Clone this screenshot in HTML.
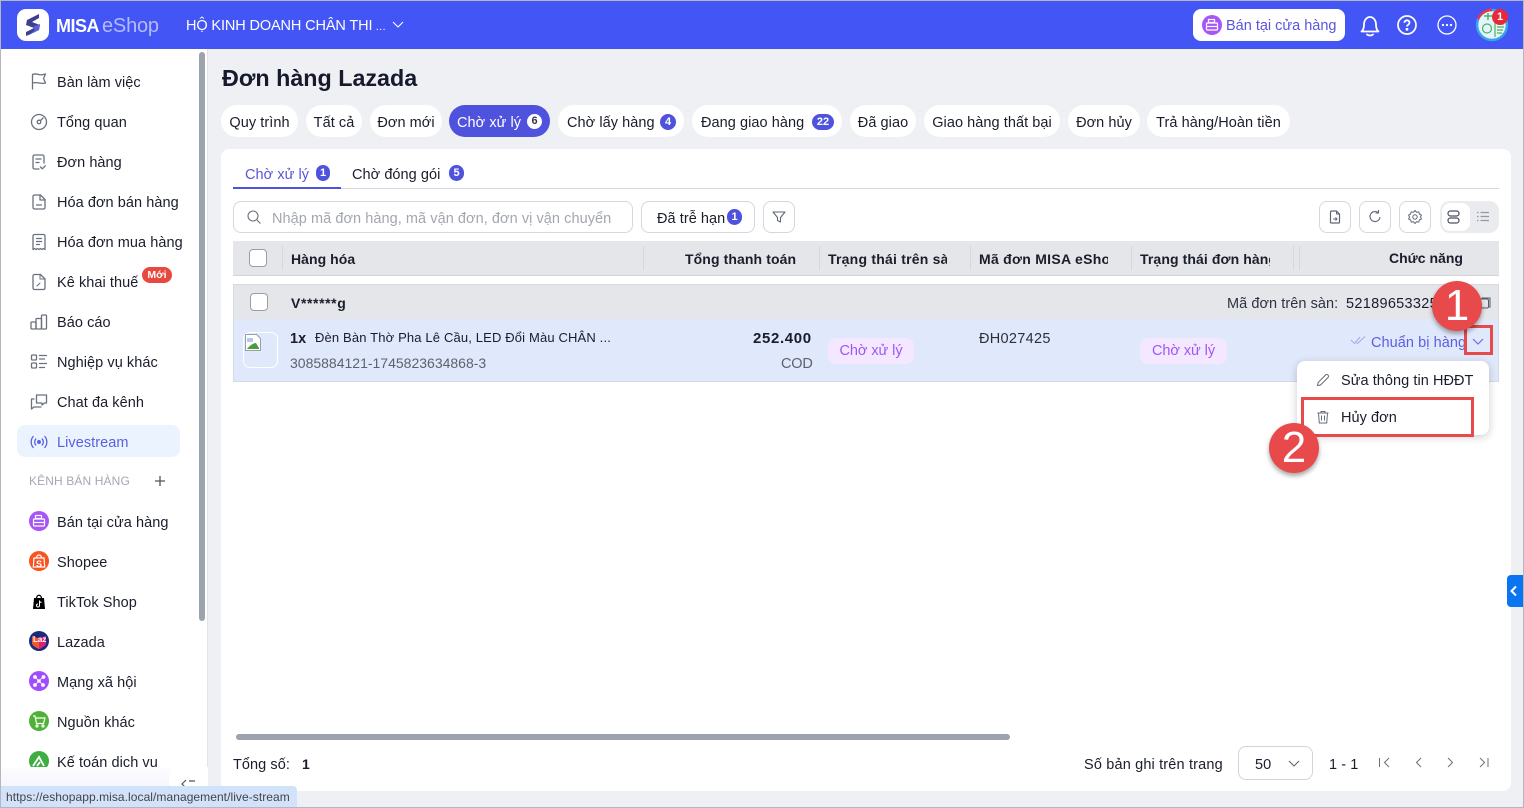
<!DOCTYPE html>
<html lang="vi"><head><meta charset="utf-8"><title>Đơn hàng Lazada</title>
<style>
*{box-sizing:border-box}
html,body{margin:0;padding:0;width:1524px;height:808px;overflow:hidden;background:#eef0f4;font-family:"Liberation Sans",sans-serif;color:#1a1d2b}
.a{position:absolute}
.t{position:absolute;white-space:nowrap;font-size:14.5px;line-height:20px;letter-spacing:.06px;margin-top:1px}
.n{margin-top:0}
.b{font-weight:700}
.pill{position:absolute;top:105px;height:32px;border-radius:16px;background:#fff;font-size:14.5px;line-height:37px;text-align:center;white-space:nowrap;letter-spacing:.06px}
.bd{display:inline-block;min-width:16px;height:16px;border-radius:8px;background:#4f52dc;color:#fff;font-size:11px;font-weight:700;line-height:16px;text-align:center;letter-spacing:0;padding:0 3px}
.ic{position:absolute;width:20px;height:20px;fill:none;stroke:#6a707c;stroke-width:1.3;stroke-linecap:round;stroke-linejoin:round}
.c{position:absolute;width:20px;height:20px;border-radius:50%}
.tb{position:absolute;top:201px;width:32px;height:32px;border:1px solid #d5d7de;border-radius:8px;background:#fff}
.sep{position:absolute;top:246px;width:1px;height:24px;background:#d6d8de}
.cb{position:absolute;width:18px;height:18px;border:1px solid #9a9ea8;border-radius:4px;background:#fff}
.num{position:absolute;width:50px;height:50px;border-radius:50%;background:#e8494a;color:#fff;font-size:44px;line-height:50px;text-align:center;box-shadow:0 3px 5px rgba(0,0,0,.35)}
.tag{position:absolute;top:338px;height:26px;border-radius:8px;background:#f3e8ff;color:#a155f7;font-size:14.5px;line-height:26px;text-align:center;letter-spacing:-.05px}
</style></head><body>

<!-- top bar -->
<div class="a" style="left:0;top:0;width:1524px;height:49px;background:#4355f5;border-top:1px solid #b5b7c0"></div>
<div class="a" style="left:17px;top:9px;width:32px;height:32px;border-radius:9px;background:#fff"></div>
<svg class="a" style="left:23px;top:13px" width="20" height="24" viewBox="0 0 20 24"><path d="M16 1 4 7 3 12l8 3-8 4v4l13-6 1-5-8-3 7-4z" fill="#3d3f8f"/><path d="M9 14l8-3-1 6-12 6 8-6z" fill="#5b5fd6"/></svg>
<div class="t b" style="left:56px;top:13px;font-size:18px;line-height:24px;color:#fff;letter-spacing:-.5px">MISA</div>
<div class="t" style="left:102px;top:13px;font-size:20px;line-height:24px;color:#b4bcfa;letter-spacing:-.2px">eShop</div>
<div class="t" style="left:186px;top:15px;font-size:14.5px;color:#fff;letter-spacing:-.12px">HỘ KINH DOANH CHÂN THI<span style="font-size:11px;letter-spacing:.3px"> ...</span></div>
<svg class="a" style="left:391px;top:19px" width="14" height="12" fill="none" stroke="#fff" stroke-width="1.100"><path d="M2 3l5 5 5-5"/></svg>

<div class="a" style="left:1193px;top:9px;width:152px;height:32px;border-radius:8px;background:#fff"></div>
<div class="c" style="left:1202px;top:15px;background:#a855f7"></div>
<svg class="a" style="left:1202px;top:15px" width="20" height="20" fill="none" stroke="#fff" stroke-width="1.200"><rect x="6.500" y="4.500" width="6" height="3"/><rect x="4.500" y="8" width="11" height="7" rx="1"/><path d="M4.500 11.500h11"/></svg>
<div class="t" style="left:1226px;top:15px;color:#5a55dc;letter-spacing:0">Bán tại cửa hàng</div>
<svg class="a" style="left:1359px;top:13px" width="22" height="24" fill="none" stroke="#fff" stroke-width="1.800" stroke-linecap="round" stroke-linejoin="round"><path d="M2.500 18.500c2-1.600 2.500-3.500 2.500-7 0-4 2.500-7.500 6-7.500s6 3.500 6 7.500c0 3.500.5 5.400 2.500 7z"/><path d="M8 21.500c1.800 1.300 4.200 1.300 6 0"/></svg>
<svg class="a" style="left:1396px;top:14px" width="22" height="22" fill="none" stroke="#fff" stroke-width="1.700"><circle cx="11" cy="11" r="9"/><path d="M8.500 8.800c0-3.300 5-3.300 5 0 0 2-2.500 2-2.500 3.700" stroke-width="1.800"/><circle cx="11" cy="15.300" r=".6" fill="#fff"/></svg>
<svg class="a" style="left:1436px;top:14px" width="22" height="22" fill="none" stroke="#fff" stroke-width="1.300"><circle cx="11" cy="11" r="9"/><circle cx="7" cy="11" r=".5" fill="#fff"/><circle cx="11" cy="11" r=".5" fill="#fff"/><circle cx="15" cy="11" r=".5" fill="#fff"/></svg>
<svg class="a" style="left:1475px;top:8px" width="34" height="34"><circle cx="17" cy="17" r="15" fill="#e3f4ff" stroke="#38a3e8" stroke-width="2.500"/><path d="M3 11A15 15 0 0 1 17 2" fill="none" stroke="#ef3340" stroke-width="2.500"/><circle cx="12" cy="20.500" r="4.500" fill="none" stroke="#4cb552" stroke-width="1.200"/><path d="M20 7v22" stroke="#4cb552" stroke-width="1.200"/><path d="M22 16h7M22 19h7M22 22h6M22 25h5" stroke="#4cb552" stroke-width="1.300"/><path d="M9 8h8M13 5v7" stroke="#4cb552" stroke-width="1.500"/></svg>
<div class="a b" style="left:1492px;top:9px;width:16px;height:16px;border-radius:50%;background:#e8293a;color:#fff;font-size:11px;line-height:16px;text-align:center">1</div>

<!-- sidebar -->
<div class="a" style="left:0;top:49px;width:208px;height:759px;background:#fff;border-right:1px solid #e2e4ea"></div>
<div class="a" style="left:199px;top:52px;width:6px;height:569px;border-radius:3px;background:#9ca3af"></div>
<div class="a" style="left:17px;top:425px;width:163px;height:32px;border-radius:8px;background:#ebf3ff"></div>

<svg class="ic" style="left:29px;top:71px" viewBox="0 0 20 20"><path d="M3.500 18V3.500c4-1.800 6 .8 9.500 .3l3.500-.8-2 4.500 2 4.500c-4.500 1.500-8-1.500-13 0"/></svg>
<svg class="ic" style="left:29px;top:112px" viewBox="0 0 20 20"><circle cx="10" cy="10" r="7.500"/><circle cx="10" cy="10" r="1.800"/><path d="M11.300 8.700 14 6"/></svg>
<svg class="ic" style="left:29px;top:152px" viewBox="0 0 20 20"><path d="M10 17H5.500A1.500 1.500 0 0 1 4 15.500V4.500A1.500 1.500 0 0 1 5.500 3h8A1.500 1.500 0 0 1 15 4.500V11"/><path d="M7 7h5M7 10.500h3M11.500 15l1.800 1.800 3-3"/></svg>
<svg class="ic" style="left:29px;top:192px" viewBox="0 0 20 20"><path d="M5.500 3h6L16 7.500v8A1.500 1.500 0 0 1 14.500 17h-9A1.500 1.500 0 0 1 4 15.500v-11A1.500 1.500 0 0 1 5.500 3z"/><path d="M11 3v5h5M7.500 13h5"/></svg>
<svg class="ic" style="left:29px;top:232px" viewBox="0 0 20 20"><path d="M4 17.500V4A1.500 1.500 0 0 1 5.500 2.500h9A1.500 1.500 0 0 1 16 4v13.500l-1.500-1-1.500 1-1.500-1-1.500 1-1.500-1-1.500 1-1.500-1z"/><path d="M7.500 6.500h5M7.500 9.500h5M7.500 12.500h3"/></svg>
<svg class="ic" style="left:29px;top:272px" viewBox="0 0 20 20"><path d="M5.500 2.500h6L16 7v9A1.500 1.500 0 0 1 14.500 17.500h-9A1.500 1.500 0 0 1 4 16V4A1.500 1.500 0 0 1 5.500 2.500z"/><path d="M11 2.500V7h5M8 14l3-3" stroke-width="1"/></svg>
<svg class="ic" style="left:29px;top:312px" viewBox="0 0 20 20"><rect x="2" y="10" width="5" height="7" rx="1"/><rect x="7" y="6.500" width="5.500" height="10.500" rx="1"/><rect x="12.500" y="3" width="5" height="14" rx="1"/></svg>
<svg class="ic" style="left:29px;top:352px" viewBox="0 0 20 20"><rect x="2.500" y="3" width="5" height="5" rx="1"/><rect x="2.500" y="11" width="5" height="5" rx="1"/><path d="M10.500 3.500h7M10.500 7h5M10.500 11.500h7M10.500 15.500h5"/></svg>
<svg class="ic" style="left:29px;top:392px" viewBox="0 0 20 20"><path d="M7.500 3h10v8h-2l-2.500 2v-2H7.500z"/><path d="M5 7H2.500v10l2.500-2h7"/></svg>
<svg class="ic" style="left:29px;top:432px;stroke:#5a5fe0" viewBox="0 0 20 20"><circle cx="10" cy="10" r="1.300" fill="#5a5fe0"/><path d="M6.800 13c-1.500-1.600-1.500-4.400 0-6M13.200 7c1.500 1.600 1.500 4.400 0 6M4.200 15.500c-2.700-3-2.700-8 0-11M15.800 4.500c2.700 3 2.700 8 0 11"/></svg>

<div class="t" style="left:57px;top:72px">Bàn làm việc</div>
<div class="t" style="left:57px;top:112px">Tổng quan</div>
<div class="t" style="left:57px;top:152px">Đơn hàng</div>
<div class="t" style="left:57px;top:192px">Hóa đơn bán hàng</div>
<div class="t" style="left:57px;top:232px">Hóa đơn mua hàng</div>
<div class="t" style="left:57px;top:272px">Kê khai thuế</div>
<div class="a b" style="left:142px;top:267px;width:30px;height:16px;border-radius:8px;background:#e8493f;color:#fff;font-size:10.500px;line-height:16px;text-align:center">Mới</div>
<div class="t" style="left:57px;top:312px">Báo cáo</div>
<div class="t" style="left:57px;top:352px">Nghiệp vụ khác</div>
<div class="t" style="left:57px;top:392px">Chat đa kênh</div>
<div class="t" style="left:57px;top:432px;color:#5a5fe0">Livestream</div>
<div class="t" style="left:29px;top:470px;font-size:12px;letter-spacing:.12px;color:#a5a8b2">KÊNH BÁN HÀNG</div>
<svg class="a" style="left:153px;top:474px" width="14" height="14" stroke="#555" stroke-width="1.300"><path d="M7 2v10M2 7h10"/></svg>

<div class="c" style="left:29px;top:511px;background:#a855f7"></div>
<svg class="a" style="left:29px;top:511px" width="20" height="20" fill="none" stroke="#fff" stroke-width="1.200"><rect x="6.500" y="4.500" width="6" height="3"/><rect x="4.500" y="8" width="11" height="7" rx="1"/><path d="M4.500 11.500h11"/></svg>
<div class="t" style="left:57px;top:512px">Bán tại cửa hàng</div>
<div class="c" style="left:29px;top:551px;background:#f9531f"></div>
<svg class="a" style="left:29px;top:551px" width="20" height="20" fill="none" stroke="#fff" stroke-width="1.200"><path d="M5 7h10l.7 9H4.300zM7.500 7c0-4 5-4 5 0"/></svg>
<div class="a b" style="left:36px;top:558px;font-size:9px;line-height:12px;color:#fff">S</div>
<div class="t" style="left:57px;top:552px">Shopee</div>
<svg class="a" style="left:31px;top:593px" width="16" height="18"><path d="M3 5h10l1 11H2z" fill="#000"/><path d="M5.500 6c0-5 5-5 5 0" fill="none" stroke="#000" stroke-width="1.300"/><path d="M8.500 7.500v5a1.500 1.500 0 1 1-1.500-1.500M8.500 8c.4 1 1.200 1.500 2 1.500" fill="none" stroke="#fff" stroke-width="1"/></svg>
<div class="t" style="left:57px;top:592px">TikTok Shop</div>
<div class="c" style="left:29px;top:631px;background:#1c2a7c"></div>
<svg class="a" style="left:29px;top:631px" width="20" height="20"><path d="M3 5c3 1 5 2 7 2s4-1 7-2v7c0 3-5 5-7 6-2-1-7-3-7-6z" fill="#f1582b"/><path d="M10 7c2 0 4-1 7-2v7c0 3-5 5-7 6z" fill="#e21f77"/></svg>
<div class="a" style="left:33px;top:635px;font-size:8px;line-height:10px;color:#fff;font-weight:700">Laz</div>
<div class="t" style="left:57px;top:632px">Lazada</div>
<div class="c" style="left:29px;top:671px;background:#a04dff"></div>
<svg class="a" style="left:29px;top:671px" width="20" height="20" fill="#fff" stroke="#fff"><path d="M6 6l8 8M14 6l-8 8" stroke-width=".8"/><circle cx="10" cy="10" r="1.300"/><circle cx="6" cy="6" r="1.400"/><circle cx="14.500" cy="6" r="1.400"/><circle cx="6" cy="14" r="1.400"/><circle cx="14" cy="14" r="1.400"/></svg>
<div class="t" style="left:57px;top:672px">Mạng xã hội</div>
<div class="c" style="left:29px;top:711px;background:#4fb136"></div>
<svg class="a" style="left:29px;top:711px" width="20" height="20" fill="none" stroke="#fff" stroke-width="1.200"><path d="M4 5h2l1.500 7.500h7L16 7H6.500"/><circle cx="8" cy="15" r="1"/><circle cx="14" cy="15" r="1"/></svg>
<div class="t" style="left:57px;top:712px">Nguồn khác</div>
<div class="a" style="left:17px;top:751px;width:163px;height:16px;overflow:hidden"><div class="c" style="left:12px;top:0;background:#3eae43"></div><svg class="a" style="left:12px;top:0" width="20" height="20" fill="none" stroke="#fff" stroke-width="1.800"><path d="M4 15l6-9 5 9M8 15l3-4"/></svg></div>

<div class="t" style="left:57px;top:752px;height:14px;overflow:hidden">Kế toán dịch vụ</div>
<div class="a" style="left:0;top:767px;width:208px;height:22px;background:linear-gradient(#fdfdff,#f4f4fc)"></div>
<div class="a" style="left:169px;top:767px;width:39px;height:30px;background:#fff;border-radius:8px 0 0 0"></div>
<svg class="a" style="left:180px;top:778px" width="16" height="10" fill="none" stroke="#555" stroke-width="1.200"><path d="M6 2 2 6l4 4M9 3h6"/></svg>

<!-- page title -->
<div class="t b n" style="left:222px;top:63px;font-size:23.300px;line-height:30px;letter-spacing:0;color:#161a2c">Đơn hàng Lazada</div>

<!-- pills -->
<div class="pill" style="left:221px;width:77px">Quy trình</div>
<div class="pill" style="left:306px;width:56px">Tất cả</div>
<div class="pill" style="left:370px;width:72px">Đơn mới</div>
<div class="pill" style="left:449px;width:101px;background:#4f52dc;color:#fff;text-align:left;padding-left:8px">Chờ xử lý</div>
<div class="a b" style="left:527px;top:114px;width:15px;height:15px;border-radius:50%;background:#fff;color:#33364a;font-size:11px;line-height:15px;text-align:center">6</div>
<div class="pill" style="left:558px;width:126px;text-align:left;padding-left:9px">Chờ lấy hàng</div>
<div class="bd a" style="left:660px;top:114px">4</div>
<div class="pill" style="left:692px;width:150px;text-align:left;padding-left:9px">Đang giao hàng</div>
<div class="bd a" style="left:812px;top:114px;min-width:22px">22</div>
<div class="pill" style="left:850px;width:66px">Đã giao</div>
<div class="pill" style="left:924px;width:136px">Giao hàng thất bại</div>
<div class="pill" style="left:1068px;width:72px">Đơn hủy</div>
<div class="pill" style="left:1147px;width:143px">Trả hàng/Hoàn tiền</div>

<!-- main card -->
<div class="a" style="left:221px;top:149px;height:642px;background:#fff;border-radius:8px;width:1290px"></div>

<div class="t" style="left:245px;top:164px;color:#5a55dc">Chờ xử lý</div>
<div class="bd a" style="left:316px;top:165px;min-width:14px;width:13px;height:16px;padding:0;border-radius:7px">1</div>
<div class="t" style="left:352px;top:164px">Chờ đóng gói</div>
<div class="bd a" style="left:449px;top:165px;min-width:14px;width:15px;height:16px;padding:0">5</div>
<div class="a" style="left:233px;top:188px;width:1266px;height:1px;background:#d5d6e0"></div>
<div class="a" style="left:233px;top:187px;width:108px;height:2px;background:#4f52dc"></div>

<!-- search -->
<div class="a" style="left:233px;top:201px;width:400px;height:32px;border:1px solid #d5d7de;border-radius:8px;background:#fff"></div>
<svg class="a" style="left:246px;top:209px" width="16" height="16" fill="none" stroke="#6a6f7a" stroke-width="1.100"><circle cx="7" cy="7" r="5"/><path d="M11 11l3.500 3.500"/></svg>
<div class="t" style="left:272px;top:208px;color:#a3a6b0">Nhập mã đơn hàng, mã vận đơn, đơn vị vận chuyển</div>
<div class="a" style="left:641px;top:201px;width:114px;height:32px;border:1px solid #d5d7de;border-radius:8px;background:#fff"></div>
<div class="t" style="left:657px;top:208px">Đã trễ hạn</div>
<div class="bd a" style="left:727px;top:209px;min-width:14px;width:15px;height:16px;padding:0">1</div>
<div class="tb" style="left:763px"></div>
<svg class="a" style="left:771px;top:209px" width="16" height="16" fill="none" stroke="#5f6672" stroke-width="1.100" stroke-linejoin="round"><path d="M2 3h12L9.500 8.500V13l-3-1.500v-3z"/></svg>

<div class="tb" style="left:1319px"></div>
<svg class="a" style="left:1327px;top:209px" width="16" height="16" fill="none" stroke="#5f6672" stroke-width="1.200" stroke-linejoin="round"><path d="M4.500 2h5l3 3v8a1 1 0 0 1-1 1h-7a1 1 0 0 1-1-1V3a1 1 0 0 1 1-1z"/><path d="M9.500 2v3h3M6 10h4M8.500 8.500 10 10l-1.500 1.500" stroke-width="1"/></svg>
<div class="tb" style="left:1359px"></div>
<svg class="a" style="left:1367px;top:209px" width="16" height="16" fill="none" stroke="#5f6672" stroke-width="1.100"><path d="M13 8a5 5 0 1 1-2-4.500M11.500 1v3h-3"/></svg>
<div class="tb" style="left:1399px"></div>
<svg class="a" style="left:1407px;top:209px" width="16" height="16" fill="none" stroke="#5f6672" stroke-width="1"><circle cx="8" cy="8" r="2.200"/><path d="M8 1.500l1.500 1.700 2.200-.3.700 2.100 2 1.100-.9 1.900.9 1.900-2 1.100-.7 2.100-2.200-.3L8 14.500l-1.500-1.700-2.200.3-.7-2.100-2-1.100.9-1.900-.9-1.900 2-1.100.7-2.100 2.200.3z"/></svg>
<div class="a" style="left:1440px;top:201px;width:59px;height:32px;border-radius:10px;background:#e9ebee"></div>
<div class="a" style="left:1442px;top:203px;width:28px;height:28px;border-radius:8px;background:#fff"></div>
<svg class="a" style="left:1447px;top:210px" width="14" height="14" fill="none" stroke="#4b5160" stroke-width="1.200"><rect x="1" y="1" width="11" height="5" rx="2.500"/><rect x="1" y="8" width="11" height="5" rx="2.500"/></svg>
<svg class="a" style="left:1476px;top:211px" width="14" height="12" fill="none" stroke="#9298a4" stroke-width="1.200"><path d="M4.500 1.500H13M4.500 5.500H13M4.500 9.500H13M1 1.500h1.500M1 5.500h1.500M1 9.500h1.500"/></svg>

<!-- table head -->
<div class="a" style="left:233px;top:241px;width:1266px;height:35px;background:#e5e6ea;border-bottom:1px solid #d2d4da"></div>
<div class="cb" style="left:249px;top:249px"></div>
<div class="sep" style="left:282px"></div><div class="sep" style="left:643px"></div><div class="sep" style="left:819px"></div><div class="sep" style="left:970px"></div><div class="sep" style="left:1131px"></div><div class="sep" style="left:1293px"></div><div class="sep" style="left:1299px"></div>
<div class="t b n" style="left:291px;top:249px;font-size:14px;letter-spacing:.05px">Hàng hóa</div>
<div class="t b n" style="left:685px;top:249px;font-size:14px;letter-spacing:.1px">Tổng thanh toán</div>
<div class="t b n" style="left:828px;top:249px;width:119px;overflow:hidden;font-size:14px;letter-spacing:.22px">Trạng thái trên sàn</div>
<div class="t b n" style="left:979px;top:249px;width:129px;overflow:hidden;font-size:14px;letter-spacing:.28px">Mã đơn MISA eShop</div>
<div class="t b n" style="left:1140px;top:249px;width:130px;overflow:hidden;font-size:14px;letter-spacing:.1px">Trạng thái đơn hàng</div>
<div class="t b n" style="left:1389px;top:248px;font-size:14px;letter-spacing:0">Chức năng</div>

<!-- order group -->
<div class="a" style="left:233px;top:284px;width:1266px;height:36px;background:#e5e6ea;border:1px solid #d8dae0;border-bottom:0"></div>
<div class="a" style="left:233px;top:319px;width:1266px;height:63px;background:#e0e8fb;border:1px solid #d5d9e4;border-top:0"></div>
<div class="cb" style="left:250px;top:293px"></div>
<div class="t b n" style="left:291px;top:293px;font-size:14px;letter-spacing:.6px">V******g</div>
<div class="t" style="left:1227px;top:293px;color:#2f3340">Mã đơn trên sàn:</div>
<div class="t" style="left:1346px;top:293px;width:90px;overflow:hidden;letter-spacing:.3px">52189653325</div>
<svg class="a" style="left:1478px;top:296px" width="14" height="14" fill="none" stroke="#555a66" stroke-width="1"><rect x="1.500" y="3" width="9" height="9" rx="1.500"/><path d="M4 3V2h8v9h-1"/></svg>

<div class="a" style="left:243px;top:332px;width:35px;height:36px;border:1px solid #fff;border-radius:7px"></div>
<svg class="a" style="left:245px;top:334px" width="18" height="18"><path d="M.5.500h11l4 4v12H.5z" fill="#fff" stroke="#9aa0a8"/><path d="M2 15c3-4 7-6 9-6l3 5v1z" fill="#4b9c3c"/><path d="M2 4h6v4H2z" fill="#b4c8ef"/></svg>
<div class="t b" style="left:290px;top:328px;font-size:14.500px">1x</div>
<div class="t" style="left:315px;top:327px;font-size:13px;letter-spacing:.15px">Đèn Bàn Thờ Pha Lê Cầu, LED Đổi Màu CHÂN ...</div>
<div class="t" style="left:290px;top:352px;font-size:14px;color:#5d626e;letter-spacing:0">3085884121-1745823634868-3</div>
<div class="t b" style="left:753px;top:328px;font-size:15px;letter-spacing:.65px">252.400</div>
<div class="t" style="left:781px;top:353px;color:#5d626e;letter-spacing:-.2px">COD</div>
<div class="tag" style="left:828px;width:86px">Chờ xử lý</div>
<div class="t" style="left:979px;top:328px;color:#2d303c;letter-spacing:.3px">ĐH027425</div>
<div class="tag" style="left:1140px;width:87px">Chờ xử lý</div>
<svg class="a" style="left:1350px;top:334px" width="16" height="14" fill="none" stroke="#a4aaea" stroke-width="1"><path d="M1 6l3.500 3.500L10 3M6.500 8.500 7.500 9.500 15 2.500"/></svg>
<div class="t" style="left:1371px;top:332px;color:#5a5fe0;width:96px;overflow:hidden">Chuẩn bị hàng</div>
<svg class="a" style="left:1471px;top:336px" width="14" height="12" fill="none" stroke="#6a6fe5" stroke-width="1.200"><path d="M2 3l5 5 5-5"/></svg>

<!-- dropdown -->
<div class="a" style="left:1297px;top:361px;width:192px;height:74px;border-radius:8px;background:#fff;box-shadow:0 2px 9px rgba(0,0,0,.2)"></div>
<svg class="a" style="left:1316px;top:373px" width="14" height="14" fill="none" stroke="#666b75" stroke-width="1"><path d="M1.500 12.500l.7-3L9.500 2a1.400 1.400 0 0 1 2.500 2.500L4.500 12z"/></svg>
<div class="t" style="left:1341px;top:370px">Sửa thông tin HĐĐT</div>
<svg class="a" style="left:1316px;top:410px" width="14" height="14" fill="none" stroke="#666b75" stroke-width="1"><path d="M1.500 3h11M5 3V1.500h4V3M2.500 3l.8 10h7.400l.8-10M5.500 5.500v5M8.500 5.500v5"/></svg>
<div class="t" style="left:1341px;top:407px">Hủy đơn</div>

<!-- annotation -->
<div class="a" style="left:1301px;top:397px;width:173px;height:40px;border:3px solid #e8494a"></div>
<div class="a" style="left:1464px;top:325px;width:29px;height:30px;border:3px solid #e8494a"></div>
<div class="num" style="left:1432px;top:281px">1</div>
<div class="num" style="left:1269px;top:423px">2</div>

<!-- bottom -->
<div class="a" style="left:236px;top:734px;width:774px;height:6px;border-radius:3px;background:#9ca3af"></div>
<div class="t" style="left:233px;top:754px">Tổng số:</div>
<div class="t b n" style="left:302px;top:754px;font-size:14px">1</div>
<div class="t" style="left:1084px;top:754px;letter-spacing:.16px">Số bản ghi trên trang</div>
<div class="a" style="left:1238px;top:746px;width:75px;height:34px;border:1px solid #d2d4da;border-radius:8px"></div>
<div class="t" style="left:1255px;top:754px">50</div>
<svg class="a" style="left:1287px;top:758px" width="14" height="12" fill="none" stroke="#666" stroke-width="1.100"><path d="M2 3l5 5 5-5"/></svg>
<div class="t" style="left:1329px;top:754px">1 - 1</div>
<svg class="a" style="left:1378px;top:756px" width="116" height="14" fill="none" stroke="#6b7079" stroke-width="1"><path d="M1.500 2v9M11 2 6.500 6.500 11 11M43 2l-4.500 4.500L43 11M70 2l4.500 4.500L70 11M102 2l4.500 4.500L102 11M110 2v9"/></svg>

<!-- side tab -->
<div class="a" style="left:1507px;top:575px;width:16px;height:32px;border-radius:4px 0 0 4px;background:#0b74f0"></div>
<svg class="a" style="left:1509px;top:585px" width="10" height="12" fill="none" stroke="#fff" stroke-width="2"><path d="M7 1.500 2.500 6 7 10.500"/></svg>

<!-- status bar -->
<div class="a" style="left:0;top:786px;width:297px;height:22px;background:#d2e2fb;border-radius:0 4px 0 0"></div>
<div class="t n" style="left:6px;top:788px;font-size:12px;line-height:18px;color:#444;letter-spacing:.06px">https://eshopapp.misa.local/management/live-stream</div>

<!-- window border -->
<div class="a" style="left:0;top:0;width:1524px;height:808px;border:1px solid #b5b7bd;border-top-color:#b5b7c0;pointer-events:none"></div>
</body></html>
